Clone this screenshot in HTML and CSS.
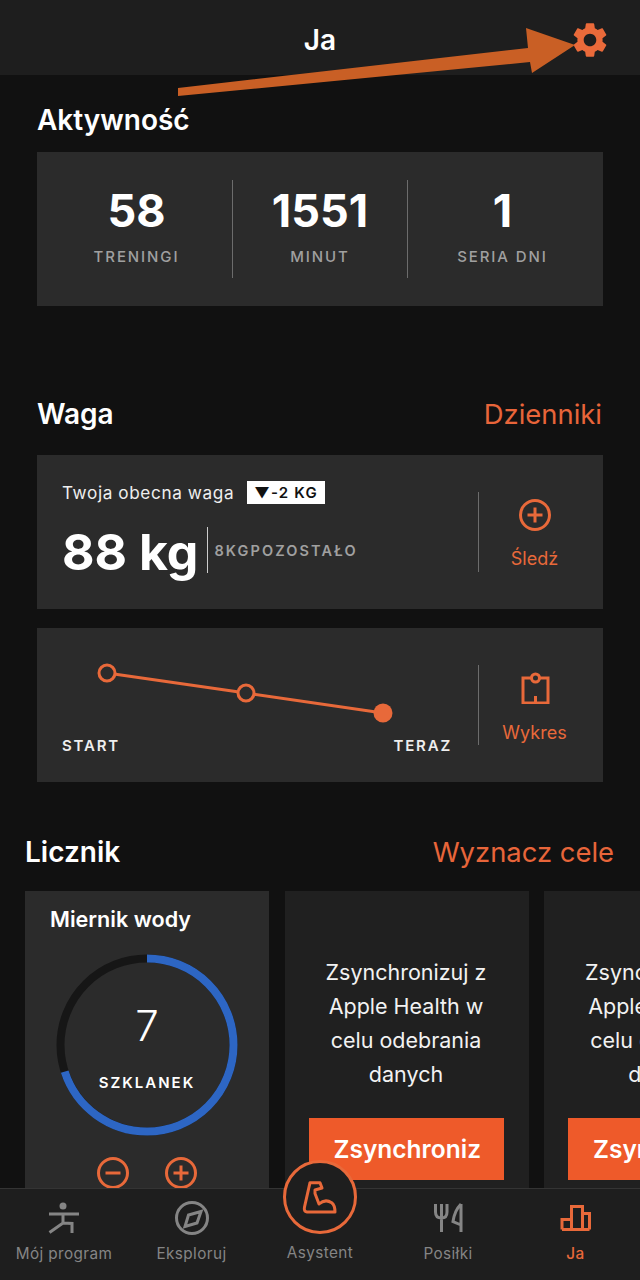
FILE: index.html
```html
<!DOCTYPE html>
<html lang="pl">
<head>
<meta charset="utf-8">
<title>Ja</title>
<link rel="stylesheet" href="styles.css">
</head>
<body>
<div class="screen">
  <header class="topbar">
    <h1 class="topbar-title">Ja</h1>
    <svg class="gear" viewBox="0 0 24 24"><path d="M19.14 12.94c.04-.3.06-.61.06-.94 0-.32-.02-.64-.07-.94l2.03-1.58c.18-.14.23-.41.12-.61l-1.92-3.32c-.12-.22-.37-.29-.59-.22l-2.39.96c-.5-.38-1.03-.7-1.62-.94l-.36-2.54c-.04-.24-.24-.41-.48-.41h-3.84c-.24 0-.43.17-.47.41l-.36 2.54c-.59.24-1.13.57-1.62.94l-2.39-.96c-.22-.08-.47 0-.59.22L2.74 8.87c-.12.21-.08.47.12.61l2.03 1.58c-.05.3-.09.63-.09.94s.02.64.07.94l-2.03 1.58c-.18.14-.23.41-.12.61l1.92 3.32c.12.22.37.29.59.22l2.39-.96c.5.38 1.03.7 1.62.94l.36 2.54c.05.24.24.41.48.41h3.84c.24 0 .44-.17.47-.41l.36-2.54c.59-.24 1.13-.56 1.62-.94l2.39.96c.22.08.47 0 .59-.22l1.92-3.32c.12-.22.07-.47-.12-.61l-2.01-1.58zM12 15.6c-1.98 0-3.6-1.62-3.6-3.6s1.62-3.6 3.6-3.6 3.6 1.62 3.6 3.6-1.62 3.6-3.6 3.6z"/></svg>
  </header>

  <svg class="callout" viewBox="0 0 640 100"><polygon points="178,88 528,48 526,28 575,45 532,73 530,62 178,96"/></svg>

  <main class="content">
    <section class="activity">
      <h2 class="heading">Aktywność</h2>
      <div class="card stats">
        <div class="stat"><b class="stat-value">58</b><span class="stat-label">TRENINGI</span></div>
        <div class="stat"><b class="stat-value">1551</b><span class="stat-label">MINUT</span></div>
        <div class="stat"><b class="stat-value">1</b><span class="stat-label">SERIA DNI</span></div>
      </div>
    </section>

    <section class="weight">
      <div class="heading-row">
        <h2 class="heading">Waga</h2>
        <a class="heading-link">Dzienniki</a>
      </div>
      <div class="card weight-card">
        <div class="weight-main">
          <div class="weight-top">
            <span class="weight-caption">Twoja obecna waga</span>
            <span class="delta">▼-2 KG</span>
          </div>
          <div class="weight-bottom">
            <b class="weight-value">88 kg</b>
            <span class="weight-left">8KGPOZOSTAŁO</span>
          </div>
        </div>
        <div class="side-action">
          <svg class="side-icon" viewBox="0 0 32 32"><circle cx="16" cy="16" r="14.5"/><path d="M16 8.5v15M8.5 16h15"/></svg>
          <span>Śledź</span>
        </div>
      </div>
      <div class="card chart-card">
        <div class="chart">
          <svg class="chart-line" viewBox="0 0 390 90">
            <polyline points="45,17 184,37 321,57"/>
            <circle class="open" cx="45" cy="17" r="8"/>
            <circle class="open" cx="184" cy="37" r="8"/>
            <circle class="now" cx="321" cy="57" r="9.5"/>
          </svg>
          <div class="chart-labels"><span>START</span><span>TERAZ</span></div>
        </div>
        <div class="side-action">
          <svg class="side-icon report" viewBox="0 0 32 32"><path d="M12.5 6H4v25h25V6h-8.5M16.5 24v7"/><circle cx="16.5" cy="6" r="4"/></svg>
          <span>Wykres</span>
        </div>
      </div>
    </section>

    <section class="counter">
      <div class="heading-row">
        <h2 class="heading">Licznik</h2>
        <a class="heading-link">Wyznacz cele</a>
      </div>
      <div class="tiles">
        <div class="tile water">
          <h3 class="tile-title">Miernik wody</h3>
          <div class="gauge">
            <svg class="gauge-ring" viewBox="0 0 182 182">
              <circle class="track" cx="91" cy="91" r="86.5"/>
              <circle class="fill" cx="91" cy="91" r="86.5" pathLength="100" stroke-dasharray="70 30" transform="rotate(-90 91 91)"/>
            </svg>
            <div class="gauge-text"><span class="gauge-value">7</span><span class="gauge-unit">SZKLANEK</span></div>
          </div>
          <div class="gauge-controls">
            <svg class="step" viewBox="0 0 32 32"><circle cx="16" cy="16" r="14.5"/><path d="M8.5 16h15"/></svg>
            <svg class="step" viewBox="0 0 32 32"><circle cx="16" cy="16" r="14.5"/><path d="M16 8.5v15M8.5 16h15"/></svg>
          </div>
        </div>
        <div class="tile sync">
          <p class="sync-text">Zsynchronizuj z Apple Health w celu odebrania danych</p>
          <div class="sync-button">Zsynchroniz</div>
        </div>
        <div class="tile sync">
          <p class="sync-text">Zsynchronizuj z Apple Health w celu odebrania danych</p>
          <div class="sync-button">Zsynchroniz</div>
        </div>
      </div>
    </section>
  </main>

  <nav class="tabbar">
    <div class="tab">
      <svg class="tab-icon" viewBox="0 0 36 36"><circle cx="17" cy="6" r="3.5" class="solid"/><path d="M3 14h30M17 14v9M3.5 32.5L17 23l9 .5V33"/></svg>
      <span>Mój program</span>
    </div>
    <div class="tab">
      <svg class="tab-icon" viewBox="0 0 36 36"><circle cx="18" cy="18" r="15.5"/><path d="M27 11.5l-12.500 3.500L11 26.500l12-3.500z"/></svg>
      <span>Eksploruj</span>
    </div>
    <div class="tab assistant">
      <div class="assistant-badge">
        <svg class="muscle" viewBox="0 0 50 50"><path d="M15 10.7H25L27 16l-7 2v3.500L24 32q6-5.500 12.700-1.300Q40 33.300 40 40H12q-3.500-.5-2.500-5z"/></svg>
      </div>
      <span>Asystent</span>
    </div>
    <div class="tab">
      <svg class="tab-icon" viewBox="0 0 36 36"><path d="M5.5 4v8c0 4 2.500 6 6 6s5.500-2 5.500-6V4M11.500 4v28M31 4v28M31 4c-4 4-7 11-8 17.500l8 3.500"/></svg>
      <span>Posiłki</span>
    </div>
    <div class="tab active">
      <svg class="tab-icon" viewBox="0 0 36 36"><path d="M4 29.500v-10h9.500M13.500 29.500V6.500h11v23M24.500 13.500h7v16M4 29.500h27.500"/></svg>
      <span>Ja</span>
    </div>
  </nav>
</div>
</body>
</html>
```
FILE: styles.css
```css
* { box-sizing: border-box; }

html, body {
  margin: 0;
  padding: 0;
  background: #111111;
}

.screen {
  position: relative;
  width: 640px;
  height: 1280px;
  overflow: hidden;
  background: #111111;
  color: #ffffff;
  font-family: Inter, "Noto Sans", sans-serif;
}

h1, h2, h3, p { margin: 0; }

.topbar {
  position: relative;
  height: 75px;
  background: #1e1e1e;
  display: flex;
  align-items: center;
  justify-content: center;
}

.topbar-title {
  font-size: 28px;
  font-weight: 600;
  line-height: 1;
  margin-top: 5px;
}

.gear {
  position: absolute;
  left: 569px;
  top: 19px;
  width: 42px;
  height: 42px;
  fill: #ea6a3a;
}

.callout {
  position: absolute;
  left: 0;
  top: 0;
  width: 640px;
  height: 100px;
  fill: #c95f25;
}

.content {
  padding-top: 28px;
}

.heading {
  font-size: 28px;
  font-weight: 600;
  line-height: 34px;
}

.heading-row {
  display: flex;
  align-items: center;
  justify-content: space-between;
}

.heading-link {
  font-size: 27.4px;
  color: #e8653a;
  line-height: 34px;
}

.card {
  background: #2b2b2b;
}

/* Activity */
.activity {
  padding: 0 37px;
}

.stats {
  margin-top: 15px;
  height: 154px;
  display: grid;
  grid-template-columns: 196px 175px 1fr;
  padding-top: 28px;
}

.stat {
  height: 98px;
  display: flex;
  flex-direction: column;
  align-items: center;
  border-right: 1px solid #6c6c6c;
}

.stat:first-child { padding-left: 4px; }
.stat:last-child { border-right: 0; padding-right: 6px; }

.stat-value {
  font-size: 45px;
  font-weight: 700;
  line-height: 60px;
  padding-top: 1px;
}

.stat-label {
  margin-top: 7px;
  font-size: 15px;
  line-height: 18px;
  letter-spacing: 1.9px;
  color: #a0a0a0;
  font-weight: 500;
}

/* Weight */
.weight {
  padding: 0 37px;
  margin-top: 91px;
}

.weight .heading-row {
  padding-right: 1px;
  margin-bottom: 24px;
}

.weight-card,
.chart-card {
  height: 154px;
  display: flex;
  padding-left: 25px;
}

.chart-card { margin-top: 19px; }

.weight-main {
  flex: 1;
  padding-top: 26px;
}

.weight-top {
  display: flex;
  align-items: center;
  height: 23px;
}

.weight-caption {
  font-size: 17.2px;
  letter-spacing: 0.6px;
  color: #eeeeee;
}

.delta {
  margin-left: 13px;
  width: 78px;
  height: 23px;
  background: #ffffff;
  color: #111111;
  font-size: 15px;
  font-weight: 600;
  letter-spacing: 1.2px;
  display: flex;
  align-items: center;
  justify-content: center;
}

.weight-bottom {
  display: flex;
  align-items: center;
  margin-top: 23px;
  height: 46px;
}

.weight-value {
  font-size: 50px;
  font-weight: 700;
  height: 46px;
  line-height: 50px;
  padding-right: 9px;
  border-right: 1px solid #cccccc;
}

.weight-left {
  margin-left: 6px;
  font-size: 14.5px;
  font-weight: 600;
  letter-spacing: 2.1px;
  color: #a0a0a0;
}

.side-action {
  flex: none;
  width: 125px;
  height: 80px;
  margin-top: 37px;
  padding-right: 13px;
  border-left: 1px solid #6c6c6c;
  display: flex;
  flex-direction: column;
  align-items: center;
  color: #e8693a;
  font-size: 18px;
}

.side-icon {
  width: 32px;
  height: 32px;
  margin: 7px 0 17px;
  flex: none;
  fill: none;
  stroke: #e8693a;
  stroke-width: 3;
}

.side-icon.report {
  margin-bottom: 18px;
}

.chart {
  flex: 1;
  min-width: 0;
  display: flex;
  flex-direction: column;
  padding-top: 28px;
}

.chart-line {
  width: 390px;
  height: 90px;
  fill: none;
  stroke: #e8693a;
  stroke-width: 3;
}

.chart-line .open { fill: #2b2b2b; }
.chart-line .now { fill: #e8693a; stroke: none; }

.chart-labels {
  display: flex;
  justify-content: space-between;
  width: 390px;
  margin-top: -10px;
  font-size: 15px;
  font-weight: 600;
  letter-spacing: 1.8px;
  color: #eeeeee;
}

/* Trackers */
.counter {
  margin-top: 53px;
  padding: 0 26px 0 25px;
}

.tiles {
  display: flex;
  gap: 15.5px;
  margin-top: 22px;
  width: 800px;
}

.tile {
  width: 244px;
  height: 360px;
  flex: none;
}

.water {
  background: #2b2b2b;
  padding-top: 15px;
  display: flex;
  flex-direction: column;
}

.tile-title {
  padding-left: 25px;
  font-size: 21.6px;
  font-weight: 600;
  line-height: 26px;
}

.gauge {
  position: relative;
  width: 182px;
  height: 182px;
  margin: 22px 0 0 31px;
}

.gauge-ring {
  display: block;
  width: 182px;
  height: 182px;
  fill: none;
  stroke-width: 8;
}

.track { stroke: #161616; }
.fill { stroke: #2d66c4; }

.gauge-text {
  position: absolute;
  inset: 0;
  display: flex;
  flex-direction: column;
  align-items: center;
  padding-top: 43px;
}

.gauge-value {
  font-size: 42px;
  font-weight: 300;
  line-height: 58px;
}

.gauge-unit {
  margin-top: 18px;
  font-size: 15px;
  font-weight: 600;
  letter-spacing: 2px;
}

.gauge-controls {
  display: flex;
  gap: 36px;
  padding-left: 72px;
  margin-top: 21px;
}

.step {
  width: 32px;
  height: 32px;
  fill: none;
  stroke: #e8693a;
  stroke-width: 3;
}

.sync {
  background: #202020;
  padding: 64px 24px 0;
  overflow: hidden;
}

.sync-text {
  width: 195px;
  text-align: center;
  font-size: 21.5px;
  line-height: 34px;
  color: #f2f2f2;
}

.sync-button {
  margin-top: 27px;
  width: 195px;
  height: 62px;
  line-height: 62px;
  padding-left: 25px;
  background: #ee5a2a;
  color: #ffffff;
  font-size: 24.5px;
  font-weight: 600;
  white-space: nowrap;
  overflow: hidden;
}

/* Bottom tabs */
.tabbar {
  position: absolute;
  left: 0;
  bottom: 0;
  width: 640px;
  height: 92px;
  background: #1e1e1e;
  border-top: 1px solid #343434;
  display: grid;
  grid-template-columns: 128px 127px 130px 126px 129px;
}

.tab {
  display: flex;
  flex-direction: column;
  align-items: center;
  color: #858585;
  font-size: 15.3px;
  letter-spacing: 0.4px;
  padding-top: 11px;
}

.tab span { margin-top: 8px; }

.tab-icon {
  width: 36px;
  height: 36px;
  fill: none;
  stroke: #858585;
  stroke-width: 3;
}

.tab-icon .solid { fill: #858585; stroke: none; }

.active { color: #e8693a; font-weight: 500; }
.active .tab-icon { stroke: #e8693a; }

.assistant { position: relative; padding-top: 47px; }
.assistant span { margin-top: 7px; }

.assistant-badge {
  position: absolute;
  left: 28px;
  top: -29px;
  width: 74px;
  height: 74px;
  border-radius: 50%;
  background: #1e1e1e;
  border: 3px solid #e8693a;
  display: flex;
  align-items: center;
  justify-content: center;
}

.muscle {
  width: 50px;
  height: 50px;
  fill: none;
  stroke: #e8693a;
  stroke-width: 3;
  stroke-linejoin: round;
}
```
